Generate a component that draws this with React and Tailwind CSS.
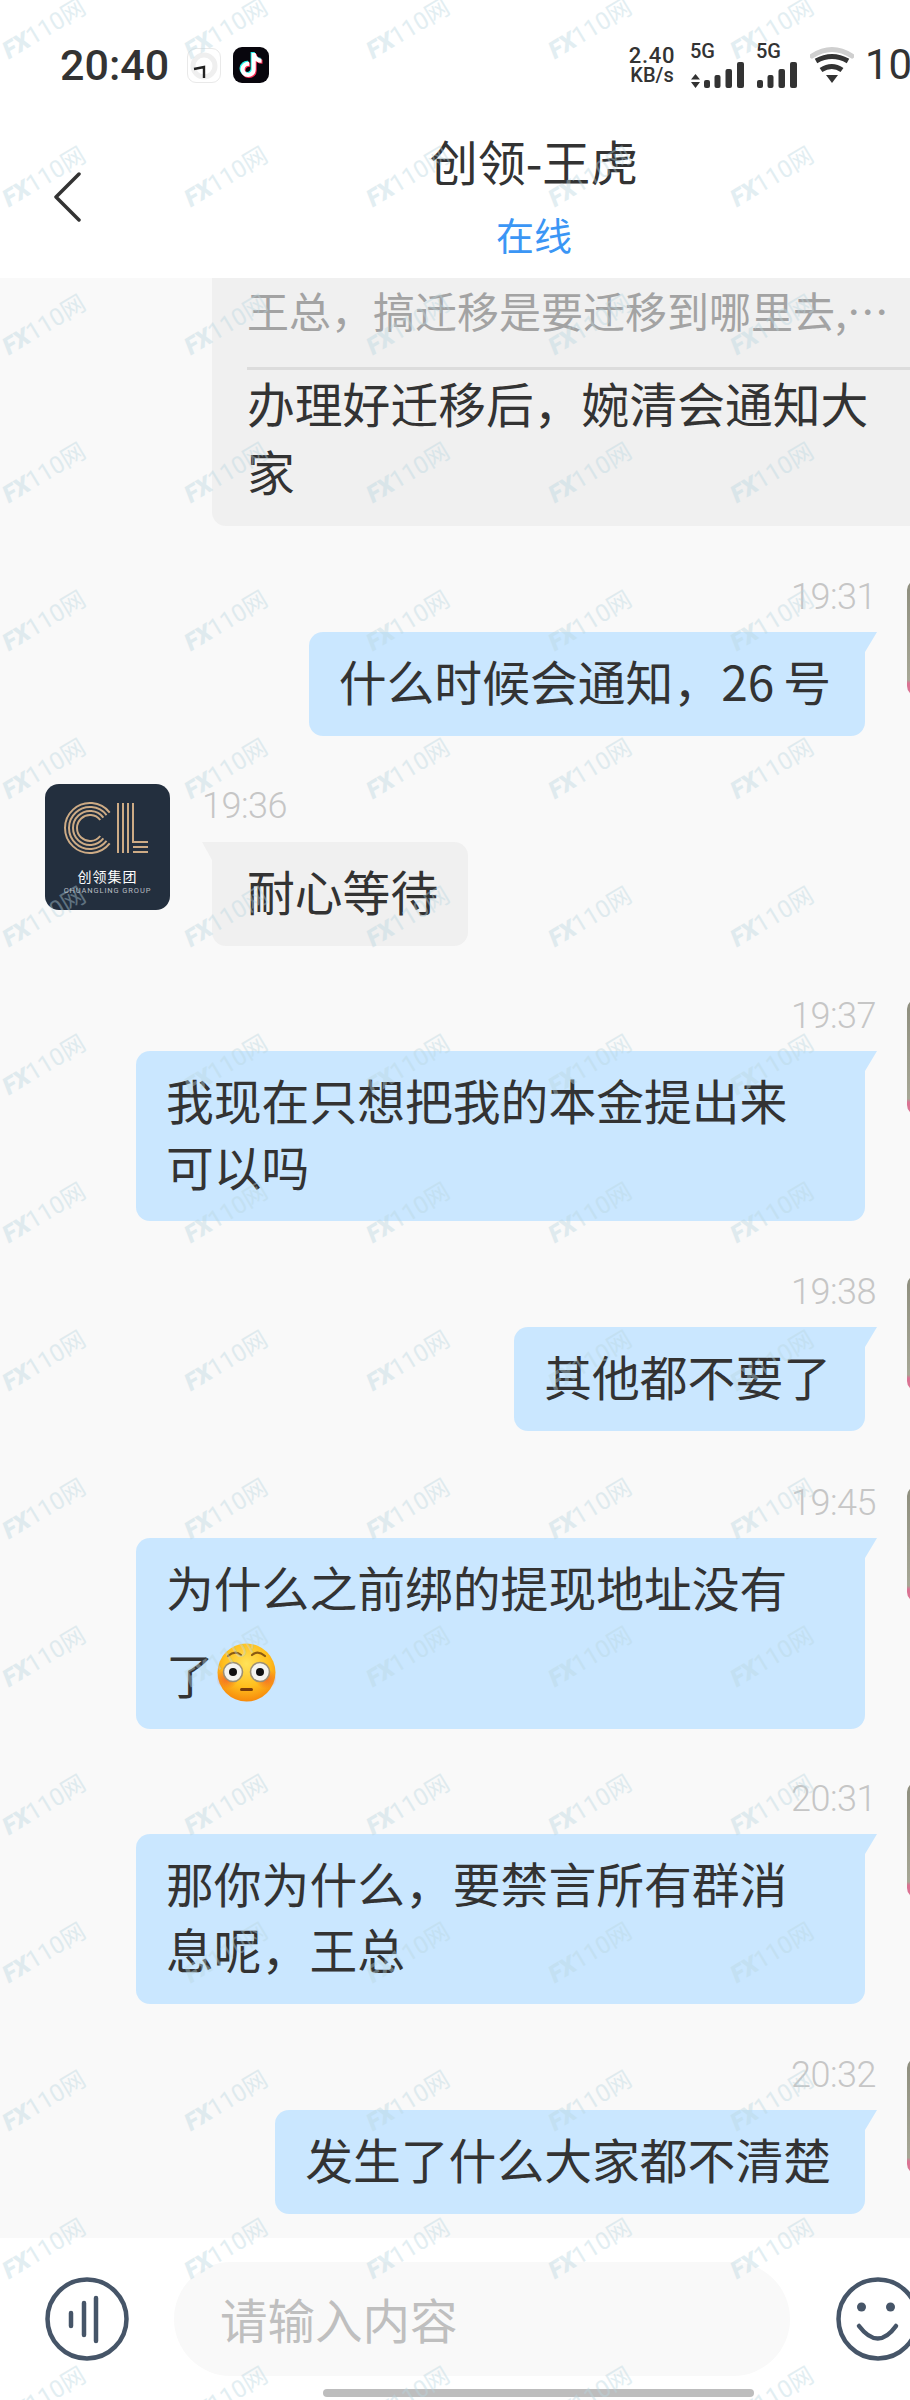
import React from "react";
import { FaTiktok } from "react-icons/fa";

function Watermarks() {
  const cells = Array.from({ length: 85 });
  return (
    <div className="absolute -left-[47px] -top-[45px] z-20 grid grid-cols-[repeat(5,182px)] auto-rows-[148px] pointer-events-none">
      {cells.map((_, i) => (
        <div key={i} className="flex items-center justify-center">
          <span className="-rotate-[31deg] whitespace-nowrap text-[24px] leading-none text-[#b9d6e0] opacity-40 font-['Roboto','Noto_Sans_CJK_SC',sans-serif]">
            <span className="font-black italic">FX</span>110网
          </span>
        </div>
      ))}
    </div>
  );
}

function Bars({ offset }) {
  return (
    <svg width="42" height="26" viewBox="0 0 42 26" className="block">
      <rect x={offset} y="18" width="6" height="8" rx="2" fill="#333" />
      <rect x={offset + 10.5} y="13" width="6" height="13" rx="2" fill="#333" />
      <rect x={offset + 21.5} y="7" width="6.5" height="19" rx="2" fill="#333" />
      <rect x={offset + 33} y="0" width="7" height="26" rx="2" fill="#333" />
    </svg>
  );
}

function StatusBar() {
  return (
    <div className="flex items-center h-[130px] pl-[60px] text-[#333] font-['Roboto',sans-serif]">
      <span className="w-[127px] text-[43px] leading-none font-medium">20:40</span>
      <div className="relative w-[34px] h-[35px] rounded-[9px] border border-[#e9e9e9] bg-white">
        <svg width="32" height="33" viewBox="0 0 32 33" className="block">
          <circle cx="16" cy="17" r="11" fill="none" stroke="#efefef" strokeWidth="5" />
          <path d="M6 20 L16 18 L16 29" fill="none" stroke="#222" strokeWidth="2.4" />
        </svg>
      </div>
      <div className="ml-[12px] w-[36px] h-[36px] rounded-[9px] bg-[#08060d] relative flex items-center justify-center">
        <FaTiktok className="absolute text-[#25f4ee] text-[24px] -translate-x-[1px] -translate-y-[1px]" />
        <FaTiktok className="absolute text-[#fe2c55] text-[24px] translate-x-[1px] translate-y-[1px]" />
        <FaTiktok className="absolute text-white text-[24px]" />
      </div>
      <div className="ml-[357px] w-[52px] flex flex-col items-center font-medium">
        <span className="text-[22px] leading-[20px] tracking-[0.7px]">2.40</span>
        <span className="text-[20px] leading-[18px]">KB/s</span>
      </div>
      <div className="ml-[12px] w-[55px] flex flex-col">
        <span className="text-[20px] leading-[16px] font-medium">5G</span>
        <div className="relative mt-[3px] h-[26px]">
          <svg width="10" height="14" viewBox="0 0 10 14" className="absolute left-[1px] top-[12px]">
            <path d="M4.5 0 L9 5.5 H0 Z M0 8 H9 L4.5 14 Z" fill="#333" />
          </svg>
          <div className="absolute left-[14px] top-0"><Bars offset={0} /></div>
        </div>
      </div>
      <div className="ml-[11px] w-[42px] flex flex-col">
        <span className="text-[20px] leading-[16px] font-medium">5G</span>
        <div className="mt-[3px]"><Bars offset={1} /></div>
      </div>
      <svg width="44" height="38" viewBox="0 0 44 38" className="ml-[12px] block">
        <path d="M2 10 Q22 -3 42 10" fill="none" stroke="#cfcfcf" strokeWidth="5" strokeLinecap="round" />
        <path d="M6 15 Q22 6 38 15" fill="none" stroke="#333" strokeWidth="5" />
        <path d="M11 24 Q22 17 32 24" fill="none" stroke="#333" strokeWidth="5" />
        <path d="M16 29 H28 L22 37 Z" fill="#333" />
      </svg>
      <span className="ml-[11px] text-[42px] leading-none">10%</span>
    </div>
  );
}

function NavBar() {
  return (
    <div className="grid grid-cols-[1fr_auto_1fr] items-center h-[148px] pl-[53px]">
      <svg width="28" height="50" viewBox="0 0 28 50" className="block -mt-[14px]">
        <path d="M26 2 L3 25 L26 48" fill="none" stroke="#333" strokeWidth="3.5" strokeLinecap="round" strokeLinejoin="round" />
      </svg>
      <div className="flex flex-col items-center -ml-[53px] -mt-[20px]">
        <span className="text-[48px] leading-[62px] text-[#333]">创领-王虎</span>
        <span className="mt-[18px] text-[38px] leading-[50px] text-[#3b96f5]">在线</span>
      </div>
      <div />
    </div>
  );
}

function Time({ children, className }) {
  return (
    <div className={`h-[30px] leading-[30px] text-[36px] text-[#c6c6c6] font-light tracking-[-0.5px] font-['Roboto',sans-serif] ${className}`}>
      {children}
    </div>
  );
}

function Sent({ time, children, className }) {
  return (
    <div className={`flex justify-end items-start pr-[36px] ${className}`}>
      <div className="flex flex-col items-end max-w-[729px]">
        <Time className="-mr-[11px] mt-[2px] mb-[20px]">{time}</Time>
        <div className="relative bg-[#cae7ff] rounded-[14px] rounded-tr-none pl-[30px] pr-[34px] pt-[16px] pb-[22px] text-[47.8px] leading-[66px] text-[#333]">
          <span className="absolute -right-[12px] top-0 w-[12px] h-[20px] bg-[#cae7ff] [clip-path:polygon(0_0,100%_0,0_100%)]" />
          {children}
        </div>
      </div>
      <div className="ml-[42px] w-[125px] h-[116px] shrink-0 rounded-[10px] bg-[linear-gradient(#8e8e7e,#a7a796_86%,#db7393_89%)]" />
    </div>
  );
}

function CompanyAvatar() {
  const arcs = [25, 21, 17, 13];
  const arcPath = (r) => {
    const a = (38 * Math.PI) / 180;
    const cx = 45, cy = 44;
    return `M${cx + r * Math.cos(a)} ${cy - r * Math.sin(a)} A${r} ${r} 0 1 0 ${cx + r * Math.cos(a)} ${cy + r * Math.sin(a)}`;
  };
  return (
    <div className="w-[125px] h-[126px] shrink-0 rounded-[14px] bg-[#232f3e] flex flex-col items-center overflow-hidden">
      <svg width="125" height="82" viewBox="0 0 125 82" className="block shrink-0">
        {arcs.map((r) => (
          <path key={r} d={arcPath(r)} fill="none" stroke="#cdab85" strokeWidth="2" />
        ))}
        <path d="M73 19 V69 M78 19 V69 M83 19 V69 M88 19 V58 H103 M88 63 H103 M88 68 H103" fill="none" stroke="#cdab85" strokeWidth="2" />
      </svg>
      <span className="mt-[1px] text-[14px] leading-[18px] text-white tracking-[1px]">创领集团</span>
      <span className="mt-[1px] text-[7.5px] leading-[10px] text-[#b9bdc2] tracking-[0.9px] font-['Roboto',sans-serif] whitespace-nowrap">CHUANGLING GROUP</span>
    </div>
  );
}

function Flushed() {
  return (
    <svg width="59" height="59" viewBox="0 0 59 59" className="inline-block ml-[3px] mt-[23px] mb-[4px] align-[-12px]">
      <defs>
        <radialGradient id="face" cx="50%" cy="35%" r="65%">
          <stop offset="0%" stopColor="#ffe25a" />
          <stop offset="60%" stopColor="#ffc01e" />
          <stop offset="100%" stopColor="#f78a0c" />
        </radialGradient>
        <radialGradient id="blush" cx="50%" cy="50%" r="50%">
          <stop offset="0%" stopColor="#f0562a" stopOpacity="0.75" />
          <stop offset="100%" stopColor="#f0562a" stopOpacity="0" />
        </radialGradient>
      </defs>
      <ellipse cx="29.5" cy="29.5" rx="29" ry="29" fill="url(#face)" />
      <ellipse cx="10" cy="36" rx="11" ry="10" fill="url(#blush)" />
      <ellipse cx="49" cy="36" rx="11" ry="10" fill="url(#blush)" />
      <path d="M11 13 Q18 7 24 12 M35 12 Q41 7 48 13" fill="none" stroke="#8a5a12" strokeWidth="2.2" strokeLinecap="round" />
      <circle cx="16" cy="29" r="9.5" fill="#f4f4f0" stroke="#9c8f73" strokeWidth="1.6" />
      <circle cx="43" cy="29" r="9.5" fill="#f4f4f0" stroke="#9c8f73" strokeWidth="1.6" />
      <circle cx="16" cy="29" r="4" fill="#111" />
      <circle cx="43" cy="29" r="4" fill="#111" />
      <rect x="23" y="45" width="13" height="3" rx="1.5" fill="#7a3d0a" />
    </svg>
  );
}

function Chat() {
  return (
    <div className="h-[1960px] overflow-hidden bg-[#f9f9f9]">
      <div className="relative ml-[212px] w-[729px] bg-[#f0f0f0] rounded-b-[14px] pl-[35px] pr-[35px] pb-[21px]">
        <div className="text-[42px] leading-[64px] text-[#a3a3a3] whitespace-nowrap">王总，搞迁移是要迁移到哪里去,⋯</div>
        <div className="mt-[25px] -mr-[35px] h-[3px] bg-[#dcdcdc]" />
        <div className="-mt-[1px] text-[47.8px] leading-[68px] text-[#333]">办理好迁移后，婉清会通知大家</div>
      </div>

      <Sent time="19:31" className="mt-[54px]">
        什么时候会通知，26<span className="ml-[9px]">号</span>
      </Sent>

      <div className="mt-[48px] flex items-start pl-[45px]">
        <CompanyAvatar />
        <div className="ml-[42px] flex flex-col items-start">
          <Time className="mt-[7px] mb-[21px] -ml-[10px]">19:36</Time>
          <div className="relative bg-[#f0f0f0] rounded-[14px] rounded-tl-none pl-[35px] pr-[30px] pt-[16px] pb-[22px] text-[47.8px] leading-[66px] text-[#333]">
            <span className="absolute -left-[10px] top-0 w-[10px] h-[18px] bg-[#f0f0f0] [clip-path:polygon(0_0,100%_0,100%_100%)]" />
            耐心等待
          </div>
        </div>
      </div>

      <Sent time="19:37" className="mt-[53px]">我现在只想把我的本金提出来可以吗</Sent>
      <Sent time="19:38" className="mt-[54px]">其他都不要了</Sent>
      <Sent time="19:45" className="mt-[55px]">
        为什么之前绑的提现地址没有了<Flushed />
      </Sent>
      <Sent time="20:31" className="mt-[53px]">那你为什么，要禁言所有群消息呢，王总</Sent>
      <Sent time="20:32" className="mt-[54px]">发生了什么大家都不清楚</Sent>
    </div>
  );
}

function InputBar() {
  return (
    <div className="relative h-[162px] bg-white flex items-start pl-[45px] pt-[24px]">
      <svg width="84" height="84" viewBox="0 0 84 84" className="block mt-[15px] shrink-0">
        <circle cx="42" cy="42" r="39.5" fill="none" stroke="#465568" strokeWidth="4.5" />
        <path d="M26 36 V49 M39 26 V58 M51 21 V64" fill="none" stroke="#465568" strokeWidth="4.5" strokeLinecap="round" />
      </svg>
      <div className="ml-[45px] w-[616px] h-[114px] rounded-[57px] bg-[#f9f9f9] flex items-center pl-[46px] shrink-0">
        <span className="text-[47.5px] leading-none text-[#bfbfbf] whitespace-nowrap">请输入内容</span>
      </div>
      <svg width="84" height="84" viewBox="0 0 84 84" className="block ml-[46px] mt-[15px] shrink-0">
        <circle cx="42" cy="42" r="39.5" fill="none" stroke="#465568" strokeWidth="4.5" />
        <circle cx="25.5" cy="30" r="4.5" fill="#465568" />
        <circle cx="54.5" cy="30" r="4.5" fill="#465568" />
        <path d="M23 49 Q42 74 60 49" fill="none" stroke="#465568" strokeWidth="4.5" strokeLinecap="round" />
      </svg>
      <div className="absolute left-[323px] top-[151px] w-[431px] h-[8px] rounded-full bg-[#bdbdbd]" />
    </div>
  );
}

export default function App() {
  return (
    <div className="relative w-[910px] h-[2400px] overflow-hidden bg-white font-['Noto_Sans_CJK_SC',sans-serif]">
      <div className="w-[1068px]">
        <StatusBar />
        <NavBar />
        <Chat />
        <InputBar />
      </div>
      <Watermarks />
    </div>
  );
}
